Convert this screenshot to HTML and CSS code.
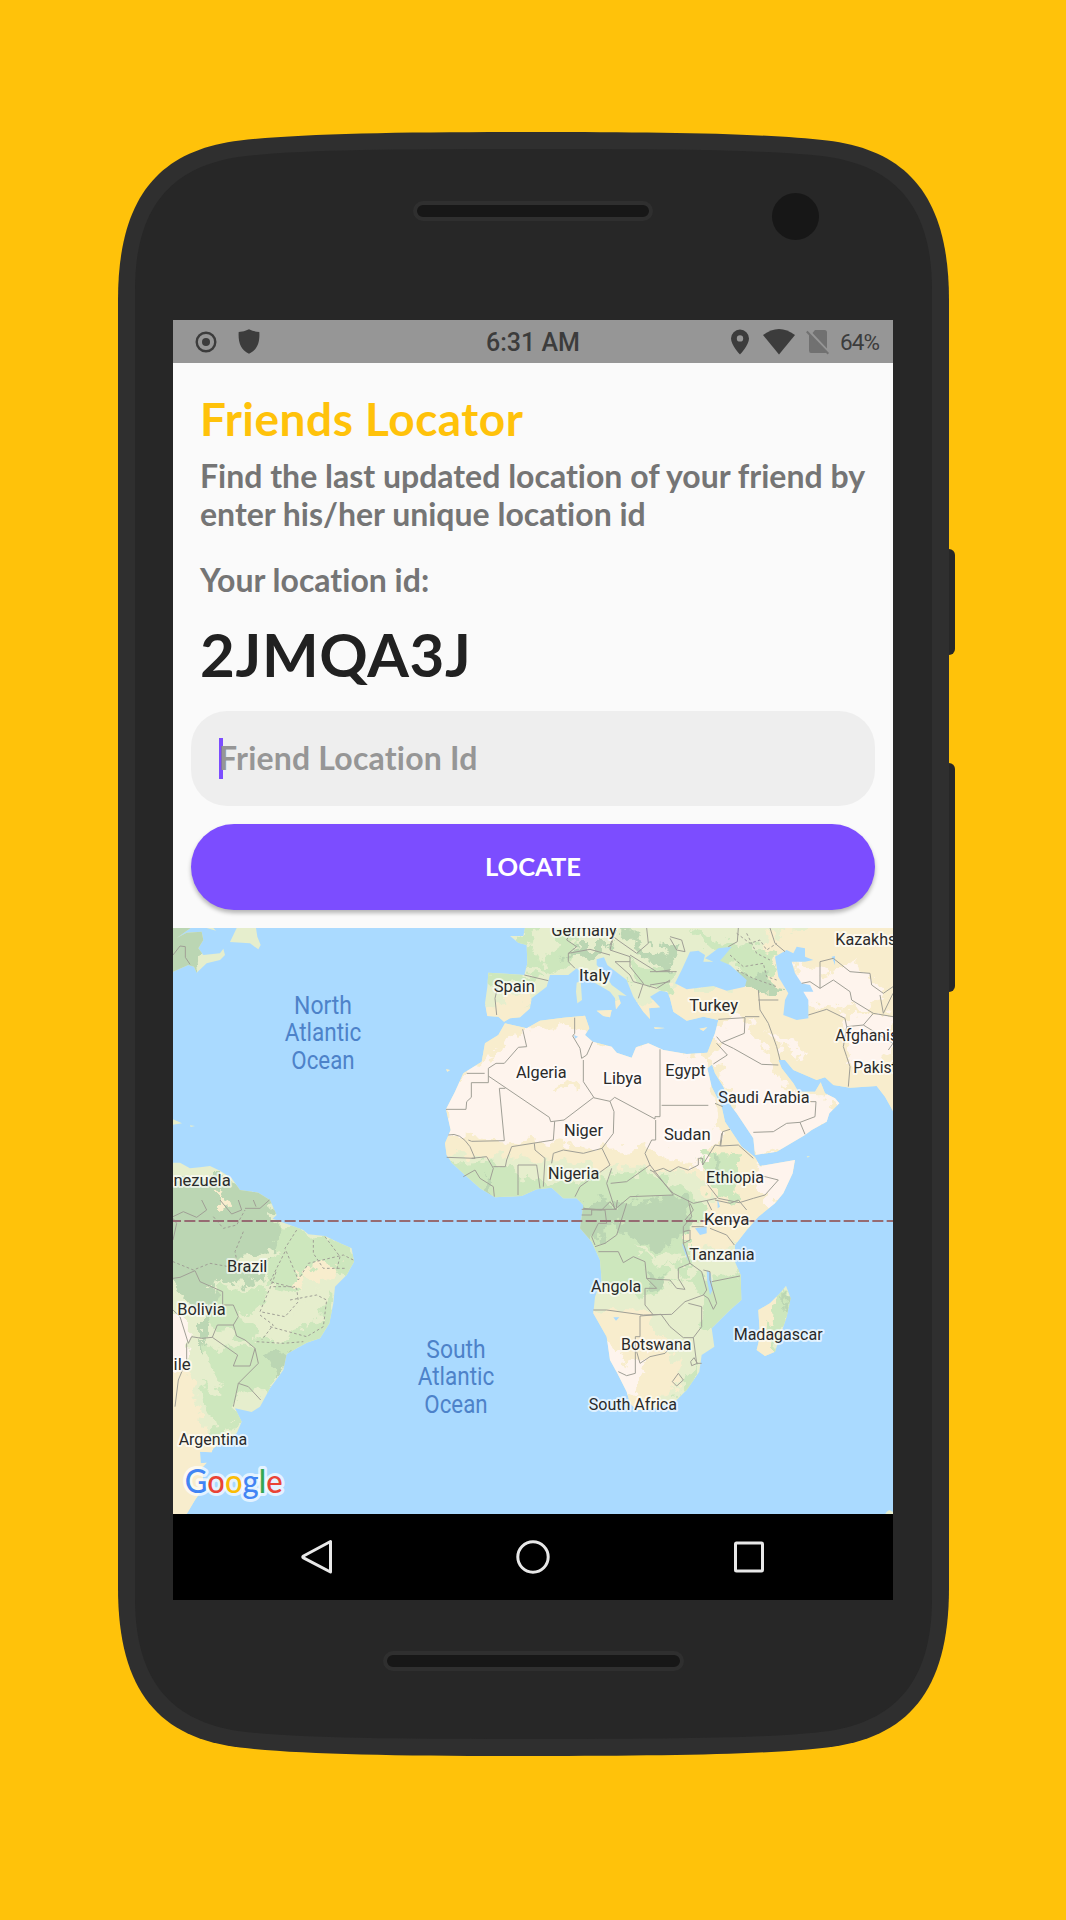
FILE: index.html
```html
<!DOCTYPE html>
<html lang="en">
<head>
<meta charset="utf-8">
<title>Friends Locator</title>
<link rel="stylesheet" href="styles.css">
</head>
<body>
<main class="stage">
  <svg class="device" viewBox="0 0 1066 1920" aria-hidden="true">
    <rect x="930" y="549" width="25" height="106" rx="6" fill="#272727"/>
    <rect x="930" y="763" width="25" height="229" rx="6" fill="#272727"/>
    <path fill="#2f2f2f" d="M118 300C118 196 160 150 240 140.500C300 133.500 400 132 533 132S767 133.500 827 140.500C907 150 949 196 949 300V1588C949 1692 907 1738 827 1747.500C767 1754.500 666 1756 533 1756S300 1754.500 240 1747.500C160 1738 118 1692 118 1588Z"/>
    <path fill="#272727" d="M135 290C135 204 174 167 238 157C295 149.500 400 149 533 149S772 149.500 829 157C893 167 932 204 932 290V1598C932 1684 893 1721 829 1731C772 1738.500 666 1739 533 1739S295 1738.500 238 1731C174 1721 135 1684 135 1598Z"/>
    <g fill="#171717" stroke="#2f2f2f" stroke-width="4">
      <rect x="415" y="203" width="236" height="16" rx="8"/>
      <rect x="385" y="1653" width="297" height="16" rx="8"/>
    </g>
    <circle cx="795.500" cy="216.500" r="23.500" fill="#171717"/>
  </svg>

  <section class="screen">
    <header class="status">
      <div class="status-left">
        <svg width="22" height="22" viewBox="0 0 22 22"><circle cx="11" cy="11" r="9.300" fill="none" stroke="#3c3c3c" stroke-width="2.400"/><circle cx="11" cy="11" r="4" fill="#3c3c3c"/></svg>
        <svg width="22" height="25" viewBox="0 0 22 25"><path fill="#3c3c3c" d="M11 .3Q16 2.700 21.300 3C22 13 19.500 21 11 24.700C2.500 21 0 13 .7 3Q6 2.700 11 .3Z"/></svg>
      </div>
      <div class="clock">6:31 AM</div>
      <div class="status-right">
        <svg width="18" height="26" viewBox="0 0 18 26"><path fill="#3c3c3c" fill-rule="evenodd" d="M9 .5A9 9 0 0 0 0 9.500C0 16 9 25.500 9 25.500S18 16 18 9.500A9 9 0 0 0 9 .5ZM9 6.200a3.200 3.200 0 1 1 0 6.400a3.200 3.200 0 0 1 0-6.400Z"/></svg>
        <svg class="wifi" width="32" height="26" viewBox="0 0 32 26"><path fill="#3c3c3c" d="M0 6Q16-6 32 6L16 25.500Z"/></svg>
        <svg class="sim" width="23" height="26" viewBox="0 0 23 26"><path fill="#717171" d="M9 1H18.500Q21 1 21 3.500V19.500L6.500 4ZM3 5.500L21 23Q20.500 24 18.500 24H5Q3 24 3 21.500Z"/><path d="M.8 2.500L22.300 24.700" stroke="#717171" stroke-width="2"/></svg>
        <span class="battery">64%</span>
      </div>
    </header>

    <div class="content">
      <h1 class="title">Friends Locator</h1>
      <p class="lead">Find the last updated location of your friend by<br>enter his/her unique location id</p>
      <p class="caption">Your location id:</p>
      <p class="code">2JMQA3J</p>
      <div class="field"><span class="hint">Friend Location Id</span></div>
      <button class="locate" type="button">LOCATE</button>
    </div>

    <svg class="map" viewBox="9 24 2160 1758" preserveAspectRatio="none">
      <defs>
        <path id="africa" d="M1005 310L1070 325L1110 302L1180 293L1245 287L1258 325L1245 345L1268 365L1325 380L1340 398L1385 413L1398 382L1435 370L1480 390L1550 402L1612 398L1628 432L1612 445L1625 500L1655 560L1665 605L1685 635L1715 680L1755 712L1770 738L1875 720L1868 760L1840 820L1815 850L1765 890L1730 930L1695 975L1695 1025L1712 1065L1714 1140L1680 1170L1625 1225L1633 1280L1595 1305L1588 1355L1550 1410L1515 1445L1460 1464L1400 1470L1380 1450L1370 1415L1342 1360L1320 1320L1310 1250L1270 1180L1275 1130L1295 1080L1290 1020L1265 965L1230 925L1240 855L1220 835L1180 835L1145 803L1100 808L1055 828L975 832L930 805L885 765L845 728L830 705L825 670L842 630L828 568L855 515L880 460L935 425L945 370L985 345Z"/>
        <path id="eurasia" d="M1065 24L1060 48L1020 48L1045 68L1070 75L1072 130L1063 165L955 158L952 200L945 250L952 288L985 290L1002 305L1020 295L1050 292L1080 265L1085 235L1130 200L1140 165L1195 165L1220 145L1260 180L1320 215L1335 235L1338 268L1352 250L1345 225L1370 228L1325 195L1300 155L1280 135L1280 118L1302 112L1312 135L1370 180L1390 230L1420 275L1440 297L1437 265L1470 262L1440 230L1470 212L1492 215L1500 235L1510 275L1550 302L1600 290L1645 300L1635 340L1612 398L1625 430L1635 460L1660 500L1685 560L1700 580L1750 655L1755 705L1820 695L1905 645L1925 630L1970 605L1978 580L2008 550L1995 535L1965 520L1952 487L1935 515L1885 515L1870 490L1835 445L1825 420L1845 420L1870 450L1940 480L1965 472L1990 495L2040 503L2120 498L2145 530L2169 573V24Z"/>
        <path id="samerica" d="M9 728L30 728L60 745L90 742L120 738L150 752L185 775L210 810L265 818L300 840L320 885L308 896L345 910L400 930L415 943L465 948L510 970L545 985L552 1025L530 1065L495 1100L490 1150L478 1210L450 1255L410 1268L350 1302L340 1350L300 1405L270 1460L245 1476L195 1465L215 1505L200 1540L130 1585L125 1597L90 1595L92 1630L110 1628L95 1645L102 1700L75 1740L50 1782H9Z"/>
        <path id="madagascar" d="M1848 1097L1862 1135L1850 1190L1815 1295L1785 1308L1760 1290L1770 1250L1765 1170L1800 1150L1830 1120Z"/>
        <path id="islands" d="M9 24H62L9 62ZM9 60L50 38L95 35L100 60L85 85L100 105L150 100L160 86L165 105L150 120L110 130L80 158L72 140L55 135L9 155ZM200 24H258L262 50L272 75L265 88L240 70L180 66ZM110 24H130L138 32ZM9 598L36 610L9 614ZM60 616L75 618L62 621ZM1220 188L1232 182L1236 240L1222 250L1218 215ZM1280 272L1325 270L1320 292L1300 288ZM1452 322L1485 324L1455 327ZM1588 326L1612 322L1600 333ZM828 448L840 450L832 455ZM2150 1775L2158 1770L2169 1776V1782H2146ZM1910 709L1920 708L1913 713Z"/>
        <clipPath id="land"><use href="#africa"/><use href="#eurasia"/><use href="#samerica"/><use href="#madagascar"/><use href="#islands"/></clipPath>
        <filter id="rough" x="-5%" y="-5%" width="110%" height="110%"><feTurbulence type="fractalNoise" baseFrequency=".025" numOctaves="4" seed="4"/><feDisplacementMap in="SourceGraphic" scale="75" xChannelSelector="R" yChannelSelector="G"/></filter>
      </defs>
      <rect x="9" y="24" width="2160" height="1758" fill="#aadaff"/>
      <g clip-path="url(#land)">
        <rect x="9" y="24" width="2160" height="1758" fill="#e6eecd"/>
        <g filter="url(#rough)">
          <!-- dry ground -->
          <path fill="#f8edcd" d="M780 250H1500V420L1900 720L1950 760L1800 960L1500 1000L1640 850L1560 760L1250 730L800 700ZM1480 200H1740L1790 40L2250 -20V620H1580L1470 330ZM1250 1170L1430 1180L1500 1290L1540 1380L1400 1500L1220 1300ZM-20 1370L60 1340L90 1500L150 1560L120 1830H-20ZM1770 1120H1840L1825 1220L1790 1330L1740 1280ZM990 250L1090 210L1070 290L980 290Z"/>
          <!-- desert -->
          <path fill="#fef4ed" d="M940 420L1060 330L1200 320L1290 370L1480 370L1620 420L1650 640L1590 740L1420 680L1260 690L1130 665L820 650V520ZM1630 400L1640 310L1730 290L1810 430L1860 520L2010 530L1940 670L1740 710ZM1770 710H1890L1850 850L1790 860L1750 780ZM1880 120L1980 160L2050 130L2150 220L2080 270L1960 260L1880 240ZM2010 290L2170 280V400L2050 460ZM1800 330L1900 380L1920 430L1840 390ZM1310 1240L1370 1330L1430 1300L1420 1390L1360 1430L1280 1340ZM-10 1170L55 1190L50 1330L-10 1400Z"/>
          <!-- grass -->
          <path fill="#cde7bd" d="M840 730L960 720L1060 770L1180 780L1320 760L1480 760L1620 870L1560 910L1560 1060L1440 1130L1220 1090L1180 850L820 860ZM1540 1080L1730 1060V1150L1640 1240L1590 1220L1600 1130ZM1040 -10H1220V110L1170 150L1060 140ZM1370 130L1520 150L1480 220L1380 180ZM1590 700L1710 700L1700 850L1640 830ZM300 900L560 980L530 1060L410 1040L380 1110L300 1100ZM90 1280L250 1280L400 1230L490 1100V1260L340 1330L290 1410L180 1440ZM150 1090L290 1110L240 1200L290 1290L90 1200ZM1560 30L1820 100L1800 200L1660 120ZM950 140L1140 170L960 200ZM90 1400L180 1430L260 1510L130 1540ZM1830 1100L1870 1120L1840 1220L1800 1320L1810 1200ZM1510 1430L1590 1330L1580 1410Z"/>
          <!-- forest -->
          <path fill="#bbd6b3" d="M-20 790L150 770L300 820L330 940L280 1090L160 1080L70 1130L-20 1060ZM1210 850L1550 830L1560 940L1430 990L1330 900L1280 960L1200 980ZM1240 75L1330 75L1290 105L1180 110ZM1330 30L1420 35L1390 65L1500 120L1460 60L1540 80L1490 150L1420 110ZM1680 150L1800 170L1840 220L1750 215ZM-10 1050L80 1080L150 1130L110 1180L30 1130ZM-20 -10L80 10L110 50L80 160L-20 170ZM940 770L985 840L930 820ZM1630 700L1670 720L1640 790ZM290 1310L360 1290L330 1370ZM1430 1060L1490 1080L1450 1120ZM90 1170L120 1200L90 1310ZM1840 1110L1860 1120L1840 1180ZM1130 50L1140 100L1100 80Z"/>
          <path fill="#f8edcd" d="M420 1030L510 1040L480 1080L440 1100L400 1060ZM150 820L180 860L150 870ZM1150 500L1220 480L1240 500L1160 510ZM370 1040L400 1060L390 1110Z"/>
          <path fill="#e6eecd" d="M1120 0L1180 60L1130 130L1080 100L1090 20ZM1400 990L1560 1010L1500 1040ZM200 1190L380 1180L430 1110L450 1200L300 1260ZM200 1010L340 1000L260 1050ZM1480 1040L1530 1050L1490 1150Z"/>
        </g>
      </g>
      <!-- inland seas and lakes -->
      <path fill="#aadaff" d="M1515 190L1535 150L1560 95L1585 92L1605 105L1600 125L1630 125L1605 115L1645 85L1685 80L1665 105L1650 122L1680 135L1730 180L1725 200L1670 212L1630 198L1550 208ZM1815 110L1850 90L1870 100L1880 80L1905 85V110L1930 120L1905 125L1865 125L1875 160L1895 190L1920 195L1930 215L1900 215L1915 240V295L1880 300L1840 285L1845 240L1855 220L1825 170ZM1575 925L1610 920V940L1590 945ZM1535 970L1548 985L1555 1025L1545 1000ZM1610 1050L1622 1060L1628 1110L1620 1125L1612 1085ZM1212 345L1224 350L1215 356ZM1330 1192L1348 1192L1338 1202ZM1985 110L1995 108V135ZM1642 835L1650 860L1643 865Z"/>
      <!-- borders -->
      <g class="borders">
        <path d="M9 105L30 78L46 80V112L60 133M890 460H944M828 568H888L890 545L904 532V488H955V445L978 430H1003L1045 382L1070 380L1058 328M955 468L1138 592L1142 605L1182 600L1270 533L1320 544L1334 532L1455 597V590H1470V388M1006 505H988L1003 662L905 664L895 660M1154 604L1150 660L1025 680L1010 720L1006 740H970M1214 293V340L1208 348L1230 385L1235 415L1250 405L1268 365M1240 420V485L1272 533M1320 544L1332 575L1330 640L1296 685L1240 700L1180 690L1150 700L1145 730M835 645Q870 635 900 680L915 715L830 712M905 715L950 710L970 745L960 780M880 770L915 750L930 775L970 800L973 830M1044 825V735H1100L1110 805M1093 670L1095 690L1125 715L1120 800M1296 685L1320 735L1230 800L1215 830M1325 745L1310 790L1335 868H1235M1322 790L1370 785L1440 735L1425 700L1445 660H1457V600M1440 735L1510 825L1380 830L1335 868"/>
        <g transform="translate(1440)"><path d="M35 556H175M218 560L195 550M0 750L10 755L40 745L60 755L85 740L115 750L145 735V715H158V735L195 675L212 678L218 635L240 628M212 678L265 675L310 715M180 750L170 790L205 835L268 848L310 835M10 755L70 820L130 850L200 835M120 850L130 870L105 900M310 637L370 635L410 610L450 607L465 643M450 607L495 590L498 545H480M305 760L385 780L345 825L310 835M215 640L210 678M205 298L285 293L283 340L215 368L200 350M200 370L232 405L190 432M215 368L250 385L335 433L385 435M325 210L330 270L355 310L380 380L390 420M285 290L328 290M325 240L385 240M510 205V125L550 115L600 155L660 160L665 195L700 220L729 200M455 190L480 185L510 205L550 180L600 215L605 240L670 280L640 315L590 320L580 380L590 410L600 440L595 500M475 285L530 268L585 295L590 320M670 280L729 290M640 315L729 370L715 390M690 225L700 280L729 220M360 24L375 70L405 95M265 24L262 65L235 80M60 55L80 90L105 95L95 60L60 50M0 155L80 155M0 195L60 185"/></g>
        <g transform="translate(780)"><path d="M283 165L355 182M202 205L195 235L200 285M410 60L440 80L415 100V125L435 145M415 100L480 88L540 105M430 24L410 60M550 50L570 65L620 100L655 70L650 24M550 50L540 90L600 110V140L640 190L625 235M555 125H600M555 125L600 165L610 185L680 205L720 180M600 105L680 155L720 150M560 30L540 75"/></g>
        <g transform="translate(0 840)"><path d="M9 50L40 35L80 52L110 30L95 0M150 0L185 42L215 30L205 0M225 25H270L298 0M250 0L258 20M9 235L30 232L75 212L90 245L158 275V315H190L205 350L190 375H142L127 412L95 415L65 410L55 430L30 350L9 330M127 412L203 465L190 498H240L255 445L225 420L200 408L190 375M255 445L265 490L205 550L190 620M205 550L235 560L272 600M9 120L20 70L9 55M50 430V480L25 540L15 620"/><path stroke-dasharray="8 7" d="M220 95L195 155L205 205L120 190L70 210L9 185M345 155L300 245L380 265L385 305L345 350L270 335L310 240L320 210M380 90L345 145L385 240L415 190L520 165L550 180M430 120V160L460 205L530 205M465 110L510 170L500 210M360 300L440 285L470 300L460 380L410 410L300 380M270 345L310 375L275 420M260 425L340 430L400 425M310 260H375M130 50L160 85L200 75L225 30"/></g>
        <g transform="translate(1080 840)"><path d="M160 25L215 30L240 5L258 30L262 0M155 45H185V30H225L230 70H205L185 110L195 135M195 140L225 130L260 105L290 10M205 155H265L280 188L310 170L345 185L350 235L380 238L420 240L440 265L465 268L445 235V205L480 190M190 330L230 330L340 345L425 343L465 305L520 285L530 270L515 215L480 190L460 130V80L485 50L475 0M350 235L380 265H345V315L370 345M330 348V410H316V520L290 527L265 515M330 348L393 343L420 380L460 413H490L515 380V320L475 310M320 455L330 490L360 470L405 460L440 420M490 413L500 490L515 490M482 485L492 473L502 490L485 497ZM427 545L445 520L460 540L440 558ZM520 210L540 215V240L560 310L550 328L535 295L520 285M545 245L630 228M540 85L590 105L613 135M485 80H530M460 95L480 90V120L460 130M530 0L545 30M555 0L600 10L625 0L650 30"/></g>
        <path stroke-dasharray="8 7" d="M1700 40L1740 70L1770 60L1790 90L1820 70M1680 105L1720 140L1780 130L1790 170L1820 180M1700 150L1750 175L1820 200M1730 40L1760 100L1800 120"/>
      </g>
      <path class="equator" d="M0 903H2169"/>
      <g class="ocean">
        <text x="459" y="282" textLength="174" lengthAdjust="spacingAndGlyphs">North</text>
        <text x="459" y="364" textLength="230" lengthAdjust="spacingAndGlyphs">Atlantic</text>
        <text x="459" y="447" textLength="190" lengthAdjust="spacingAndGlyphs">Ocean</text>
        <text x="858" y="1313" textLength="178" lengthAdjust="spacingAndGlyphs">South</text>
        <text x="858" y="1395" textLength="230" lengthAdjust="spacingAndGlyphs">Atlantic</text>
        <text x="858" y="1478" textLength="190" lengthAdjust="spacingAndGlyphs">Ocean</text>
      </g>
      <g class="country">
        <text x="1144" y="48" textLength="196" lengthAdjust="spacingAndGlyphs">Germany</text>
        <text x="971" y="215" textLength="124" lengthAdjust="spacingAndGlyphs">Spain</text>
        <text x="1227" y="183" textLength="94" lengthAdjust="spacingAndGlyphs">Italy</text>
        <text x="1558" y="274" textLength="146" lengthAdjust="spacingAndGlyphs">Turkey</text>
        <text x="1996" y="75" textLength="252" lengthAdjust="spacingAndGlyphs">Kazakhstan</text>
        <text x="1996" y="363" textLength="256" lengthAdjust="spacingAndGlyphs">Afghanistan</text>
        <text x="2050" y="459" textLength="182" lengthAdjust="spacingAndGlyphs">Pakistan</text>
        <text x="1038" y="474" textLength="152" lengthAdjust="spacingAndGlyphs">Algeria</text>
        <text x="1299" y="492" textLength="117" lengthAdjust="spacingAndGlyphs">Libya</text>
        <text x="1486" y="468" textLength="121" lengthAdjust="spacingAndGlyphs">Egypt</text>
        <text x="1645" y="549" textLength="274" lengthAdjust="spacingAndGlyphs">Saudi Arabia</text>
        <text x="1182" y="648" textLength="117" lengthAdjust="spacingAndGlyphs">Niger</text>
        <text x="1482" y="660" textLength="140" lengthAdjust="spacingAndGlyphs">Sudan</text>
        <text x="1134" y="777" textLength="154" lengthAdjust="spacingAndGlyphs">Nigeria</text>
        <text x="1608" y="789" textLength="174" lengthAdjust="spacingAndGlyphs">Ethiopia</text>
        <text x="1602" y="916" textLength="136" lengthAdjust="spacingAndGlyphs">Kenya</text>
        <text x="1558" y="1020" textLength="196" lengthAdjust="spacingAndGlyphs">Tanzania</text>
        <text x="1263" y="1116" textLength="151" lengthAdjust="spacingAndGlyphs">Angola</text>
        <text x="1353" y="1290" textLength="211" lengthAdjust="spacingAndGlyphs">Botswana</text>
        <text x="1691" y="1260" textLength="267" lengthAdjust="spacingAndGlyphs">Madagascar</text>
        <text x="1256" y="1470" textLength="265" lengthAdjust="spacingAndGlyphs">South Africa</text>
        <text x="-47" y="798" textLength="229" lengthAdjust="spacingAndGlyphs">Venezuela</text>
        <text x="171" y="1056" textLength="121" lengthAdjust="spacingAndGlyphs">Brazil</text>
        <text x="22" y="1185" textLength="145" lengthAdjust="spacingAndGlyphs">Bolivia</text>
        <text x="-50" y="1350" textLength="112" lengthAdjust="spacingAndGlyphs">Chile</text>
        <text x="26" y="1575" textLength="206" lengthAdjust="spacingAndGlyphs">Argentina</text>
      </g>
      <text class="google" x="44" y="1720" textLength="294" lengthAdjust="spacingAndGlyphs"><tspan fill="#4285f4">G</tspan><tspan fill="#ea4335">o</tspan><tspan fill="#fbbc05">o</tspan><tspan fill="#4285f4">g</tspan><tspan fill="#34a853">l</tspan><tspan fill="#ea4335">e</tspan></text>
    </svg>

    <nav class="navbar">
      <svg width="36" height="36" viewBox="0 0 36 36"><path d="M31.500 2.500V33L4.500 18.800Q3 18 4.500 17Z"/></svg>
      <svg width="36" height="36" viewBox="0 0 36 36"><circle cx="18" cy="18" r="15.200"/></svg>
      <svg width="36" height="36" viewBox="0 0 36 36"><rect x="4.500" y="4" width="27" height="28" rx="1"/></svg>
    </nav>
  </section>
</main>
</body>
</html>
```
FILE: styles.css
```css
* { box-sizing: border-box; }
body { margin: 0; background: #ffc20a; }
h1, p { margin: 0; font-weight: 700; white-space: nowrap; }

.stage { position: relative; width: 1066px; height: 1920px; padding: 320px 0 0 173px; overflow: hidden; }
.device { position: absolute; inset: 0; width: 1066px; height: 1920px; }
.screen { position: relative; width: 720px; height: 1280px; display: flex; flex-direction: column; background: #fafafa; font-family: Lato, "Open Sans", sans-serif; font-variant-ligatures: none; overflow: hidden; }

.status { flex: none; height: 43px; padding: 0 14px 0 22px; display: grid; grid-template-columns: 1fr auto 1fr; align-items: center; background: #969696; color: #3c3c3c; font-family: Roboto, sans-serif; }
.status-left { display: flex; align-items: center; gap: 21px; }
.status-right { display: flex; align-items: center; justify-content: flex-end; }
.clock { padding: 2px 8px 0 0; font-size: 25px; font-weight: 500; }
.wifi { margin-left: 14px; }
.sim { margin-left: 11px; }
.battery { margin-left: 11px; padding-top: 1px; font-size: 22.500px; letter-spacing: -.9px; }

.content { flex: none; height: 565px; padding: 26px 18px 0; display: flex; flex-direction: column; }
.content > p, .title { padding-left: 9px; }
.title { height: 68px; line-height: 60px; font-size: 46px; letter-spacing: .5px; color: #ffc20a; }
.lead { height: 76px; line-height: 38px; font-size: 32px; color: #757575; }
.caption { margin-top: 28px; line-height: 38px; font-size: 32px; color: #757575; }
.code { margin-top: 15px; height: 80px; line-height: 80px; font-size: 60px; letter-spacing: .7px; color: #212121; }
.field { margin-top: 17px; height: 95px; padding: 27px 28px; border-radius: 36px; background: #eee; }
.hint { display: block; height: 41px; line-height: 39px; border-left: 4px solid #7c4dff; font-size: 32px; font-weight: 700; letter-spacing: .2px; color: #969696; text-indent: -4px; }
.locate { flex: none; margin-top: 18px; height: 86px; padding: 0 0 3px; border: 0; border-radius: 43px; background: #7c4dff; color: #fff; font: 700 25.500px Lato, sans-serif; box-shadow: 0 3px 4px rgba(0, 0, 0, .28); }

.map { flex: none; display: block; width: 720px; height: 586px; font-family: Roboto, sans-serif; }
.borders { fill: none; stroke: #a09f96; stroke-width: 3; stroke-linejoin: round; }
.equator { fill: none; stroke: #966b72; stroke-width: 6; stroke-dasharray: 33 10; }
.ocean { fill: #4d82c9; font-size: 79px; text-anchor: middle; }
.country { fill: #2a2a2a; font-size: 51px; stroke: rgba(255, 255, 255, .65); stroke-width: 12; stroke-linejoin: round; paint-order: stroke; }
.google { font: 500 98px Lato, sans-serif; stroke: rgba(255, 255, 255, .7); stroke-width: 18; stroke-linejoin: round; paint-order: stroke; }

.navbar { flex: 1; padding: 0 126px; display: flex; align-items: center; justify-content: space-between; background: #000; }
.navbar svg { fill: none; stroke: #e8e8e8; stroke-width: 3; stroke-linejoin: round; }
```
